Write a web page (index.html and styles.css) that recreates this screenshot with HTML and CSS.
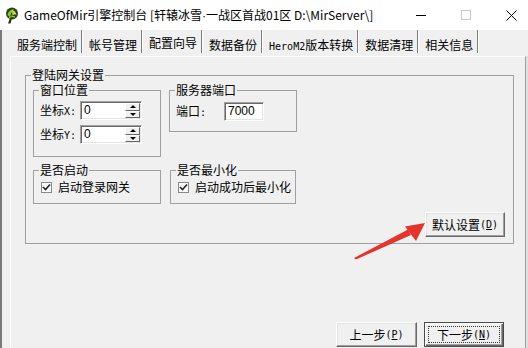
FILE: index.html
```html
<!DOCTYPE html>
<html>
<head>
<meta charset="utf-8">
<link rel="stylesheet" href="styles.css">
</head>
<body>
<div class="window">
  <div class="titlebar">
    <svg class="appicon" viewBox="0 0 16 17" width="16" height="17">
      <path d="M7 11 L5 16.5 L7.5 16.5 L9 11 Z" fill="#3a2a1a"/>
      <circle cx="9" cy="6.5" r="6" fill="#24471a"/>
      <path d="M4.5 8 Q6 2 11 2.5 Q8 5 7 10 Z" fill="#8cc63f"/>
      <path d="M9 3 Q13 4 13.5 8 Q11 6 9.5 9 Z" fill="#d9d23a"/>
      <path d="M6 11 Q8 8 12 10" stroke="#b4e04a" stroke-width="1" fill="none"/>
    </svg>
    <span class="title">GameOfMir引擎控制台 [轩辕冰雪<span class="dot">·</span>一战区首战01区 D:\MirServer\]</span>
    <div class="controls">
      <svg class="ctl" width="10" height="10" viewBox="0 0 10 10"><line x1="0" y1="5.5" x2="10" y2="5.5" stroke="#000" stroke-width="1"/></svg>
      <svg class="ctl max" width="10" height="10" viewBox="0 0 10 10"><rect x="0.5" y="0.5" width="9" height="9" fill="none" stroke="#c8c8c8" stroke-width="1"/></svg>
      <svg class="ctl close" width="11" height="11" viewBox="0 0 11 11"><path d="M0.5 0.5 L10.5 10.5 M10.5 0.5 L0.5 10.5" stroke="#000" stroke-width="1"/></svg>
    </div>
  </div>
  <div class="client">
    <div class="tabs">
      <span class="tab">服务端控制</span>
      <span class="tab">帐号管理</span>
      <span class="tab active">配置向导</span>
      <span class="tab">数据备份</span>
      <span class="tab"><span class="lat">HeroM2</span>版本转换</span>
      <span class="tab">数据清理</span>
      <span class="tab">相关信息</span>
    </div>
    <div class="panel">
      <fieldset class="group outer">
        <legend>登陆网关设置</legend>
        <div class="row">
          <fieldset class="group g-pos">
            <legend>窗口位置</legend>
            <div class="field">
              <span class="lbl">坐标<span class="lat">X:</span></span>
              <span class="edit spin"><span class="val">0</span><span class="spinbtns"><span class="sb up"></span><span class="sb down"></span></span></span>
            </div>
            <div class="field second">
              <span class="lbl">坐标<span class="lat">Y:</span></span>
              <span class="edit spin"><span class="val">0</span><span class="spinbtns"><span class="sb up"></span><span class="sb down"></span></span></span>
            </div>
          </fieldset>
          <fieldset class="group g-port">
            <legend>服务器端口</legend>
            <div class="field">
              <span class="lbl">端口<span class="lat">:</span></span>
              <span class="edit port"><span class="val">7000</span></span>
            </div>
          </fieldset>
        </div>
        <div class="row row2">
          <fieldset class="group g-start">
            <legend>是否启动</legend>
            <div class="check"><span class="box"><svg width="9" height="9" viewBox="0 0 9 9"><path d="M1 4 L3.5 6.5 L8 1.5" stroke="#222" stroke-width="1.6" fill="none"/></svg></span><span>启动登录网关</span></div>
          </fieldset>
          <fieldset class="group g-min">
            <legend>是否最小化</legend>
            <div class="check"><span class="box"><svg width="9" height="9" viewBox="0 0 9 9"><path d="M1 4 L3.5 6.5 L8 1.5" stroke="#222" stroke-width="1.6" fill="none"/></svg></span><span>启动成功后最小化</span></div>
          </fieldset>
        </div>
        <div class="btnrow">
          <span class="btn">默认设置<span class="lat">(<u>D</u>)</span></span>
        </div>
      </fieldset>
      <div class="navrow">
        <span class="btn prev">上一步<span class="lat">(<u>P</u>)</span></span>
        <span class="btn default"><span class="focus">下一步<span class="lat">(<u>N</u>)</span></span></span>
      </div>
    </div>
  </div>
  <svg class="arrow" width="528" height="348" viewBox="0 0 528 348">
    <path d="M354 258 L408 229.5 L411 235 L356 259.5 Z" fill="#e5342b"/>
    <path d="M425 223 L405 226.5 L416 241 Z" fill="#e5342b"/>
  </svg>
</div>
</body>
</html>
```

FILE: styles.css
```css
* { box-sizing: border-box; }
html, body { margin: 0; padding: 0; }
body {
  width: 528px;
  height: 348px;
  overflow: hidden;
  background: #f0f0f0;
  font-family: "Noto Sans CJK SC", "Noto Sans", sans-serif;
  font-size: 12px;
  line-height: 14px;
  color: #000;
}
.window { position: relative; width: 528px; height: 348px; }

.titlebar {
  height: 30px;
  background: #fff;
  display: flex;
  align-items: center;
  padding-left: 3px;
}
.appicon { margin-right: 5px; flex: none; }
.title {
  flex: 1;
  white-space: nowrap;
  font-size: 12px;
  line-height: 16px;
  color: #000;
}
.title .dot { font-family: "Liberation Sans", sans-serif; }
.controls { display: flex; align-items: center; padding-right: 11px; }
.ctl { display: block; }
.ctl.max { margin-left: 35px; }
.ctl.close { margin-left: 35px; }

.client {
  height: 318px;
  border-left: 2px solid #7a7a7a;
}
.tabs {
  display: flex;
  height: 26px;
  padding-left: 8px;
  align-items: flex-start;
}
.tab {
  padding: 8px 4px 2px 7px;
  border-right: 1px solid #7d7d7d;
  box-shadow: 1px 0 0 #fff;
  white-space: nowrap;
  height: 23px;
}
.tab.active { padding-top: 6px; }
.lat {
  font-family: "DejaVu Sans Mono", "Liberation Mono", monospace;
  font-size: 10px;
}

.panel {
  margin-left: 8px;
  width: 516px;
  height: 292px;
  border-top: 1px solid #fff;
  border-left: 1px solid #fff;
  border-right: 1px solid #a0a0a0;
  box-shadow: 2px 0 0 #e0e0e0;
  padding: 11px 0 0 14px;
}

.group {
  margin: 0;
  padding: 0;
  border: 1px solid #a0a0a0;
  min-width: 0;
}
.group > legend {
  margin-left: 5px;
  padding: 0 1px;
  line-height: 14px;
  font-size: 12px;
}
.outer { width: 489px; padding: 1px 0 6px 0; }
.row { display: flex; align-items: flex-start; }
.row2 { margin-top: 6px; }

.g-pos { width: 128px; margin-left: 7px; padding: 0 0 12px 0; }
.g-port { width: 128px; margin-left: 8px; padding: 0 0 10px 0; }
.g-start { width: 128px; margin-left: 7px; padding: 0 0 9px 0; }
.g-min { width: 126px; margin-left: 9px; padding: 0 0 9px 0; }

.field { display: flex; align-items: center; margin-top: 4px; padding-left: 6px; }
.field.second { margin-top: 5px; }
.g-port .field { margin-top: 5px; }
.lbl { width: 40px; white-space: nowrap; }
.g-port .lbl { width: 48px; }

.edit {
  display: flex;
  height: 19px;
  background: #fff;
  border-top: 1px solid #a0a0a0;
  border-left: 1px solid #a0a0a0;
  border-right: 1px solid #fff;
  border-bottom: 1px solid #fff;
  box-shadow: inset 1px 1px 0 #696969, inset -1px -1px 0 #e3e3e3;
  font-family: "Liberation Sans", sans-serif;
  font-size: 12px;
  line-height: 15px;
}
.edit .val { flex: 1; padding: 1px 0 0 3px; }
.spin { width: 62px; }
.port { width: 40px; }

.spinbtns {
  display: flex;
  flex-direction: column;
  width: 15px;
  margin: 1px 1px 1px 0;
}
.sb {
  flex: 1;
  background: #f0f0f0;
  border-top: 1px solid #fff;
  border-left: 1px solid #fff;
  border-right: 1px solid #696969;
  border-bottom: 1px solid #696969;
  display: flex;
  align-items: center;
  justify-content: center;
}
.sb::after {
  content: "";
  width: 0;
  height: 0;
  border-left: 3px solid transparent;
  border-right: 3px solid transparent;
}
.sb.up::after { border-bottom: 3px solid #000; }
.sb.down::after { border-top: 3px solid #000; }

.check {
  display: flex;
  align-items: center;
  margin-top: 3px;
  padding-left: 7px;
  white-space: nowrap;
}
.box {
  width: 11px;
  height: 11px;
  border: 1px solid #8a8a8a;
  background: #fafafa;
  margin-right: 6px;
  display: flex;
  align-items: center;
  justify-content: center;
}
.box svg { display: block; }

.btnrow {
  display: flex;
  justify-content: flex-end;
  margin-top: 8px;
  padding-right: 8px;
}
.btn {
  display: flex;
  align-items: center;
  justify-content: center;
  width: 80px;
  height: 25px;
  background: #f0f0f0;
  border-top: 1px solid #fff;
  border-left: 1px solid #fff;
  border-right: 1px solid #696969;
  border-bottom: 1px solid #696969;
  box-shadow: inset -1px -1px 0 #a0a0a0, inset 1px 1px 0 #e3e3e3;
  white-space: nowrap;
}
.navrow {
  display: flex;
  justify-content: flex-end;
  width: 489px;
  margin-top: 78px;
  padding-right: 10px;
  gap: 7px;
}
.btn.prev { width: 81px; }
.btn.default {
  border: 1px solid #4a4a4a;
  box-shadow: inset 1px 1px 0 #fff, inset -1px -1px 0 #696969, inset -2px -2px 0 #a0a0a0;
  padding: 3px;
}
.focus {
  flex: 1;
  align-self: stretch;
  display: flex;
  align-items: center;
  justify-content: center;
  border: 1px dotted #333;
}

.arrow {
  position: absolute;
  left: 0;
  top: 0;
  pointer-events: none;
}
```
